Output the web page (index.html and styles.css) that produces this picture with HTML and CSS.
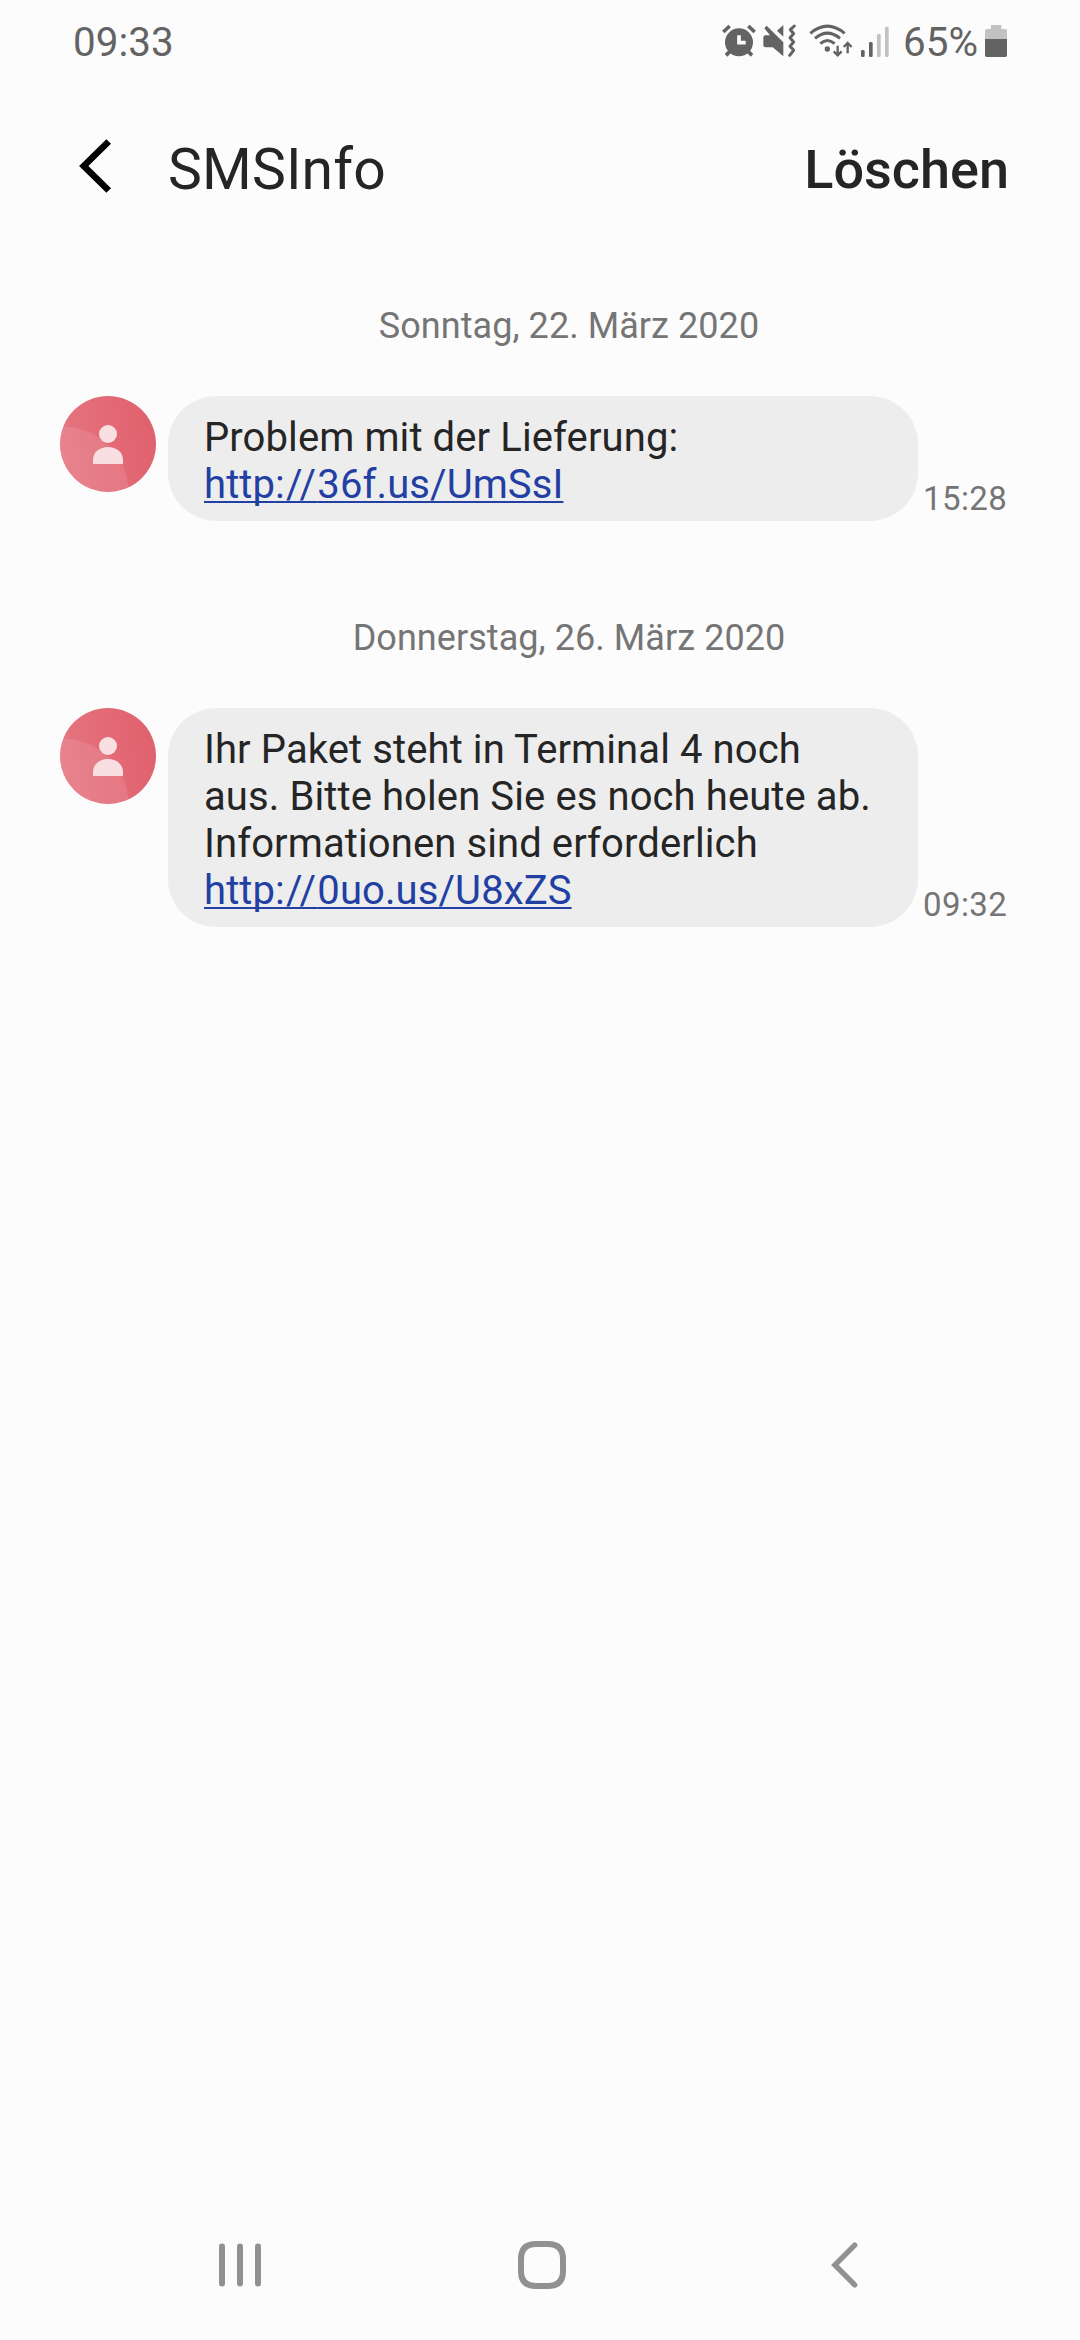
FILE: index.html
```html
<!DOCTYPE html>
<html lang="de">
<head>
<meta charset="utf-8">
<title>SMSInfo</title>
<link rel="stylesheet" href="styles.css">
</head>
<body>
<div class="screen">
  <div class="status-bar">
    <span class="clock">09:33</span>
    <div class="status-icons">
      <svg class="icon-alarm" viewBox="33 39 108 108" fill="#636363" stroke="#636363" stroke-width="11">
        <circle cx="87" cy="97" r="42" stroke="none"/>
        <path d="M40 66 59 48M115 48 134 66M59 125 48 136M115 125 126 136" stroke-linejoin="round"/>
        <path d="M87 76V98H107" fill="none" stroke="#fcfcfc" stroke-width="11"/>
      </svg>
      <svg class="icon-mute" viewBox="156 39 105 108" fill="#636363">
        <path d="M160 82q0-6 6-6H180L163 55l7-8 50 50V139L188 112H166q-6 0-6-6Z"/>
        <path d="M220 45V80L201 62Z"/>
        <path d="M253 48 241 59 251 71 240 83 251 96 240 109 251 121 239 136" fill="none" stroke="#636363" stroke-width="9" stroke-linejoin="round" stroke-linecap="round"/>
      </svg>
      <svg class="icon-wifi" viewBox="294 39 135 108" fill="none" stroke="#636363" stroke-width="9">
        <path d="M301 70Q352 27 404 70M315 85Q352 54 390 85M331 101Q352 82 374 101"/>
        <circle cx="352" cy="117" r="8" fill="#636363" stroke="none"/>
        <path d="M383 107V136M371 124 383 136 395 124M413 130V99M401 111 413 99 425 111" stroke-width="7"/>
      </svg>
      <svg class="icon-signal" viewBox="450 39 90 108" fill="#636363">
        <rect x="453" y="120" width="11" height="21" rx="4"/>
        <rect x="477" y="96" width="11" height="45" rx="4"/>
        <rect x="501" y="72" width="11" height="69" rx="4" fill="#c2c2c2"/>
        <rect x="525" y="50" width="11" height="91" rx="4" fill="#c2c2c2"/>
      </svg>
      <span class="battery-level">65%</span>
      <svg class="icon-battery" viewBox="315 39 66 108">
        <path d="M315 87V62q0-5 5-5H333V45H364V57H376q5 0 5 5V87Z" fill="#c2c2c2"/>
        <path d="M315 87H381V136q0 5-5 5H320q-5 0-5-5Z" fill="#636363"/>
      </svg>
    </div>
  </div>

  <header class="header">
    <svg class="back" viewBox="0 0 36 60" fill="none" stroke="#000" stroke-width="6.6">
      <path d="M31.7 5.5 6.8 30 31.7 54.5"/>
    </svg>
    <h1 class="title">SMSInfo</h1>
    <span class="delete">Löschen</span>
  </header>

  <main class="thread">
    <p class="date">Sonntag, 22. März 2020</p>
    <div class="message">
      <svg class="avatar" viewBox="0 0 96 96">
        <defs>
          <linearGradient id="rose" x1="0" y1="0.5" x2="1" y2="0.3">
            <stop offset="0" stop-color="#e57580"/>
            <stop offset="1" stop-color="#e0606d"/>
          </linearGradient>
          <clipPath id="disc"><circle cx="48" cy="48" r="48"/></clipPath>
        </defs>
        <g clip-path="url(#disc)">
          <rect width="96" height="96" fill="url(#rose)"/>
          <circle cx="4" cy="95.5" r="64.5" fill="#fff" fill-opacity="0.1"/>
        </g>
        <g fill="#f8dfe2">
          <circle cx="48" cy="38" r="9"/>
          <path d="M33 68V64C33 56 40 51 48 51S63 56 63 64V68Z"/>
        </g>
      </svg>
      <p class="bubble">Problem mit der Lieferung:<br><a class="link">http<span class="slashes">://</span>36f.us/UmSsI</a></p>
      <span class="time">15:28</span>
    </div>

    <p class="date">Donnerstag, 26. März 2020</p>
    <div class="message">
      <svg class="avatar" viewBox="0 0 96 96">
        <g clip-path="url(#disc)">
          <rect width="96" height="96" fill="url(#rose)"/>
          <circle cx="4" cy="95.5" r="64.5" fill="#fff" fill-opacity="0.1"/>
        </g>
        <g fill="#f8dfe2">
          <circle cx="48" cy="38" r="9"/>
          <path d="M33 68V64C33 56 40 51 48 51S63 56 63 64V68Z"/>
        </g>
      </svg>
      <p class="bubble">Ihr Paket steht in Terminal 4 noch<br>aus. Bitte holen Sie es noch heute ab.<br>Informationen sind erforderlich<br><a class="link">http<span class="slashes">://</span>0uo.us/U8xZS</a></p>
      <span class="time">09:32</span>
    </div>
  </main>

  <nav class="nav-bar">
    <svg class="nav-icon" viewBox="0 0 48 48" stroke="#919191" stroke-width="6" stroke-linecap="round">
      <path d="M6 5.5V42.5M24 5.5V42.5M42 5.5V42.5"/>
    </svg>
    <svg class="nav-icon" viewBox="0 0 48 48" fill="none" stroke="#919191" stroke-width="6">
      <path d="M18 3H30C40 3 45 8 45 18V30C45 40 40 45 30 45H18C8 45 3 40 3 30V18C3 8 8 3 18 3Z"/>
    </svg>
    <svg class="nav-icon" viewBox="0 0 48 48" fill="none" stroke="#919191" stroke-width="5.4" stroke-linecap="round">
      <path d="M34.7 4.2 14.9 24 34.7 43.8"/>
    </svg>
  </nav>
</div>
</body>
</html>
```

FILE: styles.css
```css
* {
  box-sizing: border-box;
}

body {
  margin: 0;
  background: #fcfcfc;
  font-family: Roboto, "Liberation Sans", sans-serif;
  color: #252525;
}

h1,
p {
  margin: 0;
  font-weight: 400;
}

svg {
  display: block;
  flex: none;
}

.screen {
  display: flex;
  flex-direction: column;
  width: 1080px;
  height: 2340px;
}

.status-bar {
  display: flex;
  justify-content: space-between;
  align-items: flex-start;
  height: 84px;
  padding: 19px 73px 0 73px;
  font-size: 40.4px;
  line-height: 48px;
  color: #636363;
}

.status-icons {
  display: flex;
  align-items: flex-start;
}

.status-icons svg {
  height: 36px;
  margin-top: 4px;
}

.icon-alarm {
  width: 36px;
  margin-right: 5px;
}

.icon-mute {
  width: 35px;
  margin-right: 11px;
}

.icon-wifi {
  width: 45px;
  margin-right: 7px;
}

.icon-signal {
  width: 30px;
}

.battery-level {
  width: 75px;
  margin: 0 7px 0 13px;
}

.icon-battery {
  width: 22px;
}

.header {
  display: flex;
  align-items: center;
  height: 171px;
  padding: 0 71px 0 77px;
}

.back {
  width: 36px;
  height: 60px;
  margin: 0 55px 7px 0;
}

.title {
  font-size: 57px;
  line-height: 67px;
  letter-spacing: 0.15px;
}

.delete {
  margin-left: auto;
  font-size: 54px;
  line-height: 63px;
  font-weight: 500;
}

.thread {
  flex: 1;
  padding-top: 50px;
}

.date {
  margin-bottom: 49px;
  padding-left: 58px;
  font-size: 36px;
  line-height: 42px;
  letter-spacing: 0.06px;
  text-align: center;
  color: #757575;
}

.message {
  display: flex;
  align-items: flex-start;
  margin-bottom: 96px;
  padding-left: 60px;
}

.avatar {
  width: 96px;
  height: 96px;
  margin-right: 12px;
}

.bubble {
  width: 750px;
  padding: 18px 36px 13px;
  border-radius: 48px;
  background: #ededed;
  font-size: 40px;
  line-height: 47px;
  letter-spacing: 0.1px;
}

.link {
  color: #223fa3;
  text-decoration: underline;
  text-decoration-thickness: 2px;
  text-underline-offset: 3px;
  text-decoration-skip-ink: none;
}

.slashes {
  letter-spacing: 1.3px;
}

.time {
  align-self: flex-end;
  margin-left: 5px;
  padding-bottom: 3px;
  font-size: 33px;
  line-height: 39px;
  letter-spacing: 0.4px;
  color: #757575;
}

.nav-bar {
  display: flex;
  justify-content: space-between;
  align-items: center;
  height: 150px;
  padding: 0 212px 0 216px;
}

.nav-icon {
  width: 48px;
  height: 48px;
}
```
